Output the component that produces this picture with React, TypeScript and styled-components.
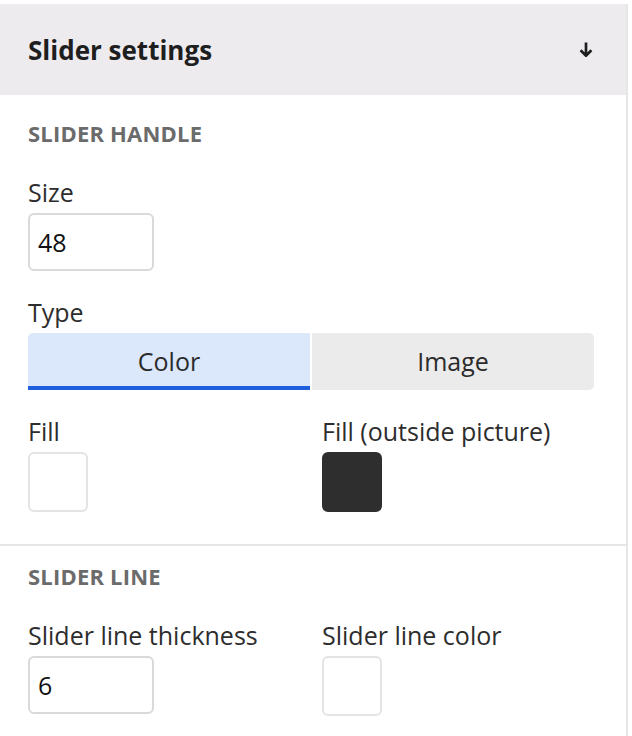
import React from 'react';
import styled, { createGlobalStyle } from 'styled-components';

const GlobalStyle = createGlobalStyle`
  html, body {
    margin: 0;
    padding: 0;
    background: #ffffff;
  }
  body {
    font-family: 'Open Sans', 'Noto Sans', sans-serif;
    color: #2b2b2b;
  }
  * {
    box-sizing: border-box;
  }
`;

const Panel = styled.div`
  width: 632px;
  min-height: 736px;
  padding-top: 4px;
  display: flex;
  flex-direction: column;
`;

const Inner = styled.div`
  width: 628px;
  border-right: 2px solid #e6e6e6;
  display: flex;
  flex-direction: column;
  flex-grow: 1;
`;

const Header = styled.button`
  display: flex;
  align-items: center;
  justify-content: space-between;
  height: 91px;
  margin-bottom: 8px;
  padding: 0 33px 0 28px;
  border: none;
  background: #edebee;
  font-family: inherit;
  font-size: 26px;
  font-weight: 700;
  color: #1e1e1e;
  text-align: left;
  cursor: pointer;
`;

const Section = styled.section<{ divider?: boolean }>`
  display: flex;
  flex-direction: column;
  padding: 17px 32px 32px 28px;
  border-top: ${(props) => (props.divider ? '2px solid #e6e6e6' : 'none')};
`;

const SectionTitle = styled.h3`
  margin: 0 0 31px;
  font-size: 22px;
  line-height: 26px;
  font-weight: 700;
  letter-spacing: 0.2px;
  text-transform: uppercase;
  color: #6b6b6b;
`;

const Field = styled.div`
  display: flex;
  flex-direction: column;
  margin-bottom: 26px;

  &:last-child {
    margin-bottom: 0;
  }
`;

const Row = styled.div`
  display: grid;
  grid-template-columns: 284px 1fr;
  gap: 10px;

  & > ${Field} {
    margin-bottom: 0;
  }
`;

const Label = styled.label`
  font-size: 25px;
  line-height: 30px;
  color: #2d2d2d;
  margin-bottom: 6px;
  white-space: nowrap;
`;

const NumberInput = styled.input`
  width: 126px;
  height: 58px;
  padding: 0 8px;
  border: 2px solid #d9d9d9;
  border-radius: 6px;
  font-family: inherit;
  font-size: 25px;
  color: #111111;
  outline: none;
`;

const Swatch = styled.div<{ color: string }>`
  width: 60px;
  height: 60px;
  border-radius: 6px;
  background: ${(props) => props.color};
  border: 2px solid
    ${(props) => (props.color === '#ffffff' ? '#e4e4e4' : props.color)};
`;

const Segmented = styled.div`
  display: grid;
  grid-template-columns: 1fr 1fr;
  gap: 2px;
  height: 57px;
`;

const Segment = styled.button<{ active?: boolean }>`
  border: none;
  font-family: inherit;
  font-size: 25px;
  color: #2b2b2b;
  cursor: pointer;
  background: ${(props) => (props.active ? '#dbe7fb' : '#ebebeb')};
  border-bottom: ${(props) =>
    props.active ? '4px solid #1f5fdc' : '0 solid transparent'};
  border-radius: ${(props) => (props.active ? '5px 0 0 0' : '0 5px 5px 0')};
  padding-top: ${(props) => (props.active ? '4px' : '0')};
`;

function ArrowDown() {
  return (
    <svg width="14" height="15" viewBox="0 0 14 15" fill="none">
      <path
        d="M7 0.5v13M1.6 8.3L7 13.7l5.4-5.4"
        stroke="#1e1e1e"
        strokeWidth="2.7"
      />
    </svg>
  );
}

function App() {
  return (
    <>
      <GlobalStyle />
      <Panel>
        <Inner>
          <Header>
            Slider settings
            <ArrowDown />
          </Header>
          <Section>
            <SectionTitle>Slider handle</SectionTitle>
            <Field>
              <Label>Size</Label>
              <NumberInput defaultValue="48" />
            </Field>
            <Field>
              <Label>Type</Label>
              <Segmented>
                <Segment active>Color</Segment>
                <Segment>Image</Segment>
              </Segmented>
            </Field>
            <Row>
              <Field>
                <Label>Fill</Label>
                <Swatch color="#ffffff" />
              </Field>
              <Field>
                <Label>Fill (outside picture)</Label>
                <Swatch color="#2e2e2e" />
              </Field>
            </Row>
          </Section>
          <Section divider>
            <SectionTitle>Slider line</SectionTitle>
            <Row>
              <Field>
                <Label>Slider line thickness</Label>
                <NumberInput defaultValue="6" />
              </Field>
              <Field>
                <Label>Slider line color</Label>
                <Swatch color="#ffffff" />
              </Field>
            </Row>
          </Section>
        </Inner>
      </Panel>
    </>
  );
}

export default App;
